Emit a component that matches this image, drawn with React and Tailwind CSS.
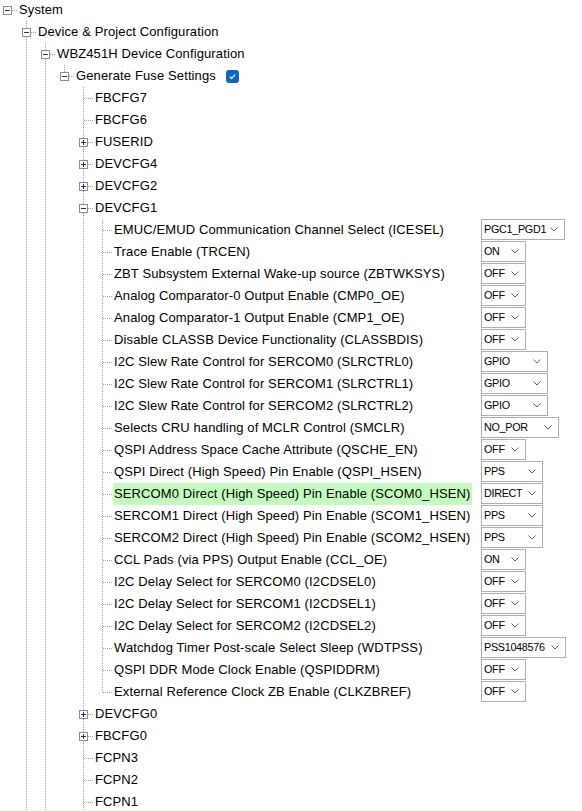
import React from "react";

const LINE = "#a0a0a0";

function Col({ full }) {
  return (
    <svg width="19" height="22" className="shrink-0 block" shapeRendering="crispEdges">
      {full && <line x1="9.5" y1="0" x2="9.5" y2="22" stroke={LINE} strokeWidth="1" strokeDasharray="1 1" />}
    </svg>
  );
}

function Own({ level, last, exp }) {
  const hasBox = !!exp;
  return (
    <svg width="19" height="22" className="shrink-0 block" shapeRendering="crispEdges">
      {level > 0 && (
        <line x1="9.5" y1="0" x2="9.5" y2={hasBox ? 7 : 11} stroke={LINE} strokeWidth="1" strokeDasharray="1 1" />
      )}
      {level > 0 && !last && (
        <line x1="9.5" y1={hasBox ? 16 : 12} x2="9.5" y2="22" stroke={LINE} strokeWidth="1" strokeDasharray="1 1" />
      )}
      <line x1={hasBox ? 14 : 10} y1="11.5" x2="19" y2="11.5" stroke={LINE} strokeWidth="1" strokeDasharray="1 1" />
      {hasBox && (
        <g>
          <rect x="5.5" y="7.5" width="8" height="8" fill="#fff" stroke="#8e8e8e" strokeWidth="1" />
          <line x1="7" y1="11.5" x2="12" y2="11.5" stroke="#333" strokeWidth="1" />
          {exp === "+" && <line x1="9.5" y1="9" x2="9.5" y2="14" stroke="#333" strokeWidth="1" />}
        </g>
      )}
    </svg>
  );
}

function Select({ value, w }) {
  return (
    <div
      className="h-[21px] border border-[#adadad] bg-white flex items-center justify-between pl-[2px] pr-[6px] text-[10.8px] tracking-[-0.3px] text-black shrink-0"
      style={{ width: w }}
    >
      <span className="leading-none">{value}</span>
      <svg width="8" height="5" viewBox="0 0 8 5" className="block shrink-0">
        <path d="M0.5 0.5 L4 4 L7.5 0.5" fill="none" stroke="#606060" strokeWidth="1" />
      </svg>
    </div>
  );
}

const L4 = [false, true, true, false];
const L5 = [false, true, true, false, true];

const rows = [
  { level: 0, exp: "-", t: "System", lines: [] },
  { level: 1, exp: "-", t: "Device & Project Configuration", lines: [false] },
  { level: 2, exp: "-", t: "WBZ451H Device Configuration", lines: [false, true] },
  { level: 3, exp: "-", t: "Generate Fuse Settings", lines: [false, true, true], last: true, check: true },
  { level: 4, t: "FBCFG7", lines: L4 },
  { level: 4, t: "FBCFG6", lines: L4 },
  { level: 4, exp: "+", t: "FUSERID", lines: L4 },
  { level: 4, exp: "+", t: "DEVCFG4", lines: L4 },
  { level: 4, exp: "+", t: "DEVCFG2", lines: L4 },
  { level: 4, exp: "-", t: "DEVCFG1", lines: L4 },
  { level: 5, t: "EMUC/EMUD Communication Channel Select (ICESEL)", lines: L5, v: "PGC1_PGD1", w: 84 },
  { level: 5, t: "Trace Enable (TRCEN)", lines: L5, v: "ON", w: 45 },
  { level: 5, t: "ZBT Subsystem External Wake-up source (ZBTWKSYS)", lines: L5, v: "OFF", w: 45 },
  { level: 5, t: "Analog Comparator-0 Output Enable (CMP0_OE)", lines: L5, v: "OFF", w: 45 },
  { level: 5, t: "Analog Comparator-1 Output Enable (CMP1_OE)", lines: L5, v: "OFF", w: 45 },
  { level: 5, t: "Disable CLASSB Device Functionality (CLASSBDIS)", lines: L5, v: "OFF", w: 45 },
  { level: 5, t: "I2C Slew Rate Control for SERCOM0 (SLRCTRL0)", lines: L5, v: "GPIO", w: 67 },
  { level: 5, t: "I2C Slew Rate Control for SERCOM1 (SLRCTRL1)", lines: L5, v: "GPIO", w: 67 },
  { level: 5, t: "I2C Slew Rate Control for SERCOM2 (SLRCTRL2)", lines: L5, v: "GPIO", w: 67 },
  { level: 5, t: "Selects CRU handling of MCLR Control (SMCLR)", lines: L5, v: "NO_POR", w: 78 },
  { level: 5, t: "QSPI Address Space Cache Attribute (QSCHE_EN)", lines: L5, v: "OFF", w: 45 },
  { level: 5, t: "QSPI Direct (High Speed) Pin Enable (QSPI_HSEN)", lines: L5, v: "PPS", w: 62 },
  { level: 5, t: "SERCOM0 Direct (High Speed) Pin Enable (SCOM0_HSEN)", lines: L5, v: "DIRECT", w: 62, hl: true },
  { level: 5, t: "SERCOM1 Direct (High Speed) Pin Enable (SCOM1_HSEN)", lines: L5, v: "PPS", w: 62 },
  { level: 5, t: "SERCOM2 Direct (High Speed) Pin Enable (SCOM2_HSEN)", lines: L5, v: "PPS", w: 62 },
  { level: 5, t: "CCL Pads (via PPS) Output Enable (CCL_OE)", lines: L5, v: "ON", w: 45 },
  { level: 5, t: "I2C Delay Select for SERCOM0 (I2CDSEL0)", lines: L5, v: "OFF", w: 45 },
  { level: 5, t: "I2C Delay Select for SERCOM1 (I2CDSEL1)", lines: L5, v: "OFF", w: 45 },
  { level: 5, t: "I2C Delay Select for SERCOM2 (I2CDSEL2)", lines: L5, v: "OFF", w: 45 },
  { level: 5, t: "Watchdog Timer Post-scale Select Sleep (WDTPSS)", lines: L5, v: "PSS1048576", w: 85 },
  { level: 5, t: "QSPI DDR Mode Clock Enable (QSPIDDRM)", lines: L5, v: "OFF", w: 45 },
  { level: 5, t: "External Reference Clock ZB Enable (CLKZBREF)", lines: L5, v: "OFF", w: 45, last: true },
  { level: 4, exp: "+", t: "DEVCFG0", lines: L4 },
  { level: 4, exp: "+", t: "FBCFG0", lines: L4 },
  { level: 4, t: "FCPN3", lines: L4 },
  { level: 4, t: "FCPN2", lines: L4 },
  { level: 4, t: "FCPN1", lines: L4 },
];

function Row({ r }) {
  return (
    <div className="flex h-[22px] items-center">
      <div className="flex items-center w-[483px] shrink-0 h-[22px]">
        {r.lines.map((f, i) => (
          <Col key={i} full={f} />
        ))}
        <Own level={r.level} last={r.last} exp={r.exp} />
        <span
          className={
            "ml-[1px] pl-[1px] pr-[1px] h-[22px] leading-[22px] whitespace-nowrap text-black " +
            (r.hl ? "bg-[#c2fbbd]" : "")
          }
        >
          {r.t}
        </span>
        {r.check && (
          <span className="ml-[9px] w-[13px] h-[13px] rounded-[3px] bg-[#1363c6] flex items-center justify-center">
            <svg width="9" height="9" viewBox="0 0 9 9">
              <path d="M1.8 4.6 L3.6 6.3 L7.2 2.6" fill="none" stroke="#fff" strokeWidth="1.2" />
            </svg>
          </span>
        )}
      </div>
      {r.v && (
        <div className="h-[22px] pb-[1px] flex">
          <Select value={r.v} w={r.w} />
        </div>
      )}
    </div>
  );
}

export default function App() {
  return (
    <div
      className="w-[582px] h-[811px] overflow-hidden bg-white text-[13px] tracking-[0.12px]"
      style={{ fontFamily: '"Liberation Sans", Arial, sans-serif' }}
    >
      <div className="-mt-[1px] -ml-[2px] flex flex-col">
        {rows.map((r, i) => (
          <Row key={i} r={r} />
        ))}
      </div>
    </div>
  );
}
